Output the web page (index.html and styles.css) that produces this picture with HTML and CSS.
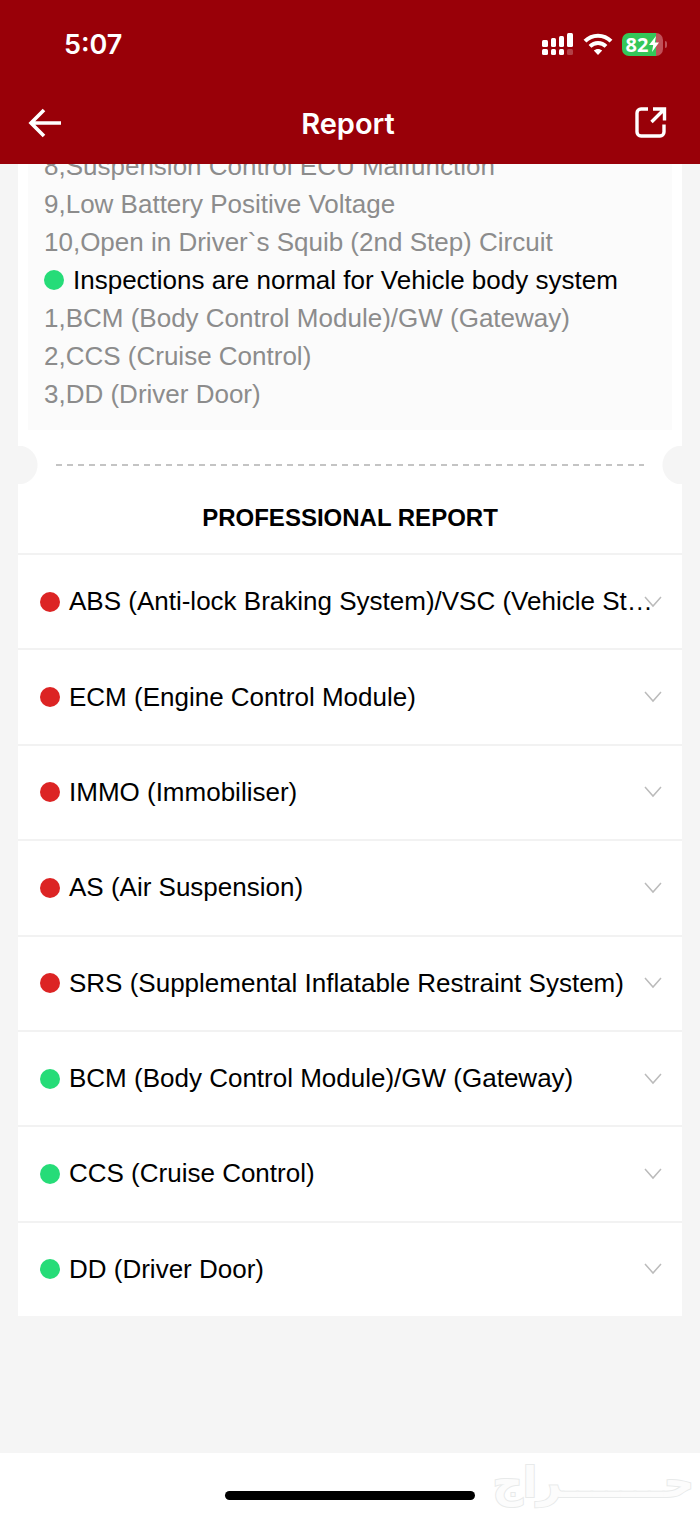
FILE: index.html
```html
<!DOCTYPE html>
<html lang="en">
<head>
    <meta charset="UTF-8" />
    <meta name="viewport" content="width=device-width, initial-scale=1.0" />
    <title>Report</title>
    <link rel="stylesheet" href="styles.css">
</head>
<body>
<header class="header">
    <div class="status-bar">
        <span class="time">5:07</span>
        <div class="status-icons">
            <!-- Dual SIM signal -->
            <svg width="32" height="24" viewBox="0 0 32 24" fill="#fff">
                <rect x="0" y="8" width="6" height="7" rx="1.5"/>
                <rect x="9" y="6" width="5" height="9" rx="1.5"/>
                <rect x="17" y="4" width="5" height="11" rx="1.5"/>
                <rect x="25" y="1" width="6" height="14" rx="1.5"/>
                <rect x="0" y="17" width="6" height="6" rx="1.5"/>
                <rect x="9" y="17" width="5" height="6" rx="1.5"/>
                <rect x="17" y="17" width="5" height="6" rx="1.5"/>
                <rect x="25" y="17" width="6" height="6" rx="1.5" opacity=".25"/>
            </svg>
            <svg width="30" height="22" viewBox="0 0 30 22" fill="none" stroke="#fff" stroke-width="4">
                <path d="M2 8.2C9.2 .8 20.8.8 28 8.2"/>
                <path d="M7 13.4c4.6-4.4 11.4-4.4 16 0"/>
                <path d="M10.8 17.6c2.2-2.2 6.2-2.2 8.4 0L15 22z" fill="#fff" stroke="none"/>
            </svg>
            <div class="battery">
                <span>82</span>
                <svg width="10" height="16" viewBox="0 0 10 16" fill="#fff"><path d="M7 0 0 9h4.2L3 16l7-9.6H5.8z"/></svg>
            </div>
        </div>
    </div>
    <nav class="nav-bar">
        <button class="icon-button" aria-label="Back">
            <svg width="34" height="34" viewBox="0 0 34 34" fill="none" stroke="#fff" stroke-width="3.6"><path d="M33 17H3M16 4 3 17l13 13"/></svg>
        </button>
        <h1>Report</h1>
        <button class="icon-button" aria-label="Share">
            <svg width="34" height="34" viewBox="0 0 34 34" fill="none" stroke="#fff" stroke-width="3.4"><path d="M14 3H7a4 4 0 0 0-4 4v19a4 4 0 0 0 4 4h19a4 4 0 0 0 4-4v-7.500M17.500 16 30 3.500M19 3h11.500v11.500"/></svg>
        </button>
    </nav>
</header>

<main class="content">
    <section class="card summary">
        <div class="summary-box">
            <p>8,Suspension Control ECU Malfunction</p>
            <p>9,Low Battery Positive Voltage</p>
            <p>10,Open in Driver`s Squib (2nd Step) Circuit</p>
            <p class="summary-title"><i class="dot green"></i>Inspections are normal for Vehicle body system</p>
            <p>1,BCM (Body Control Module)/GW (Gateway)</p>
            <p>2,CCS (Cruise Control)</p>
            <p>3,DD (Driver Door)</p>
        </div>
    </section>
    <div class="tear"><div class="tear-line"></div></div>
    <section class="card">
        <h2>PROFESSIONAL REPORT</h2>
        <ul class="systems">
            <li><button class="system"><i class="dot red"></i><span>ABS (Anti-lock Braking System)/VSC (Vehicle St…</span><svg class="chevron" viewBox="0 0 18 12"><path d="m1 1 8 9 8-9"/></svg></button></li>
            <li><button class="system"><i class="dot red"></i><span>ECM (Engine Control Module)</span><svg class="chevron" viewBox="0 0 18 12"><path d="m1 1 8 9 8-9"/></svg></button></li>
            <li><button class="system"><i class="dot red"></i><span>IMMO (Immobiliser)</span><svg class="chevron" viewBox="0 0 18 12"><path d="m1 1 8 9 8-9"/></svg></button></li>
            <li><button class="system"><i class="dot red"></i><span>AS (Air Suspension)</span><svg class="chevron" viewBox="0 0 18 12"><path d="m1 1 8 9 8-9"/></svg></button></li>
            <li><button class="system"><i class="dot red"></i><span>SRS (Supplemental Inflatable Restraint System)</span><svg class="chevron" viewBox="0 0 18 12"><path d="m1 1 8 9 8-9"/></svg></button></li>
            <li><button class="system"><i class="dot green"></i><span>BCM (Body Control Module)/GW (Gateway)</span><svg class="chevron" viewBox="0 0 18 12"><path d="m1 1 8 9 8-9"/></svg></button></li>
            <li><button class="system"><i class="dot green"></i><span>CCS (Cruise Control)</span><svg class="chevron" viewBox="0 0 18 12"><path d="m1 1 8 9 8-9"/></svg></button></li>
            <li><button class="system"><i class="dot green"></i><span>DD (Driver Door)</span><svg class="chevron" viewBox="0 0 18 12"><path d="m1 1 8 9 8-9"/></svg></button></li>
        </ul>
    </section>
</main>

<footer class="footer">
    <div class="home-indicator"></div>
    <span class="watermark" lang="ar" dir="rtl">حـــــــراج</span>
</footer>
</body>
</html>
```
FILE: styles.css
```css
* {
  box-sizing: border-box;
}
body {
  margin: 0;
  min-height: 100vh;
  display: flex;
  flex-direction: column;
  background: #f5f5f5;
  color: #000;
  font-family: "Liberation Sans", Arial, sans-serif;
  font-size: 26px;
}
h1, h2, p, ul {
  margin: 0;
  padding: 0;
}
button {
  border: none;
  background: none;
  padding: 0;
  color: inherit;
  font: inherit;
}
svg {
  display: block;
  flex-shrink: 0;
}

/* Header */
.header {
  position: relative; /* the list scrolls under it */
  z-index: 1;
  background: #990008;
  color: #fff;
  font-family: Inter, sans-serif;
}
.status-bar {
  display: flex;
  justify-content: space-between;
  align-items: center;
  height: 88px;
  padding: 0 37px 0 64px;
}
.time {
  font-size: 27px;
  font-weight: 600;
}
.status-icons {
  display: flex;
  align-items: center;
  gap: 9px;
}
.battery {
  position: relative;
  display: flex;
  align-items: center;
  justify-content: center;
  gap: 1px;
  width: 41px;
  height: 23px;
  border-radius: 7px;
  background: linear-gradient(90deg, #34c759 82%, #c05058 82%);
  font-family: "Noto Sans", sans-serif;
  font-size: 20px;
  font-weight: 700;
  line-height: 23px;
}
.battery::after {
  content: "";
  position: absolute;
  left: 43px;
  width: 2px;
  height: 7px;
  border-radius: 0 2px 2px 0;
  background: #c05058;
}
.nav-bar {
  display: flex;
  justify-content: space-between;
  align-items: center;
  height: 76px;
  padding: 0 32px 6px 28px;
}
.nav-bar h1 {
  font-size: 29px;
  font-weight: 600;
}

/* Report */
.content {
  flex: 1;
  padding: 0 18px;
}
.card {
  background: #fff;
}
.summary {
  margin-top: -17px;
  padding: 0 10px 16px;
}
.summary-box {
  padding: 0 16px 17px;
  background: #fbfbfb;
  color: #8c8c8c;
  line-height: 38px;
}
.summary-title {
  display: flex;
  align-items: center;
  gap: 9px;
  color: #000;
}
.dot {
  flex-shrink: 0;
  width: 20px;
  height: 20px;
  border-radius: 50%;
}
.red {
  background: #dc2424;
}
.green {
  background: #26dc78;
}
/* Ticket cut between the two parts */
.tear {
  display: flex;
  align-items: center;
  height: 38px;
  padding: 0 38px;
  background:
    radial-gradient(circle at 0 50%, #f5f5f5 19px, transparent 20px),
    radial-gradient(circle at 100% 50%, #f5f5f5 19px, transparent 20px),
    #fff;
}
.tear-line {
  flex: 1;
  height: 2px;
  background: repeating-linear-gradient(90deg, #c4c4c4 0 6px, transparent 6px 11px);
}
h2 {
  padding: 19px 0 20px;
  font-size: 24px;
  line-height: 30px;
  text-align: center;
}
.systems {
  display: grid;
  grid-template-columns: minmax(0, 1fr);
  grid-auto-rows: 1fr;
  min-height: 763px;
  list-style: none;
}
.systems li {
  border-top: 2px solid #f2f2f2;
}
.system {
  display: flex;
  align-items: center;
  width: 100%;
  height: 100%;
  padding: 0 20px 0 22px;
  text-align: left;
}
.system span {
  flex: 1;
  min-width: 0;
  margin-left: 9px;
  white-space: nowrap;
}
.chevron {
  width: 18px;
  height: 12px;
  fill: none;
  stroke: #bbb;
  stroke-width: 1.5;
}

/* Bottom */
.footer {
  position: relative;
  display: flex;
  justify-content: center;
  align-items: flex-end;
  height: 61px;
  padding-bottom: 14px;
  background: #fff;
}
.home-indicator {
  width: 250px;
  height: 9px;
  border-radius: 5px;
  background: #000;
}
.watermark {
  position: absolute;
  right: 6px;
  bottom: 8px;
  color: #fcfcfc;
  font-family: "DejaVu Sans", sans-serif;
  font-size: 42px;
  font-weight: 700;
  line-height: 46px;
  -webkit-text-stroke: 2px #e8eaea;
  paint-order: stroke fill;
}
```
